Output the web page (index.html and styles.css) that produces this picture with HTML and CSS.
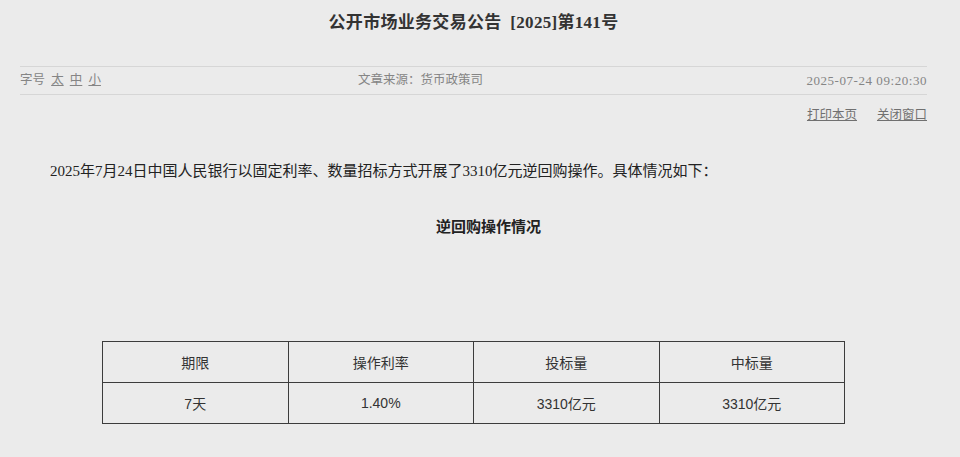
FILE: index.html
```html
<!DOCTYPE html>
<html lang="zh-CN">
<head>
<meta charset="utf-8">
<title>公开市场业务交易公告 [2025]第141号</title>
<link rel="stylesheet" href="styles.css">
</head>
<body>
<div class="page">
  <h1 class="title">公开市场业务交易公告&ensp;[2025]第141号</h1>
  <div class="info">
    <div class="fontsize">字号 <a href="#">太</a> <a href="#">中</a> <a href="#">小</a></div>
    <div class="source">文章来源：货币政策司</div>
    <div class="date">2025-07-24 09:20:30</div>
  </div>
  <div class="tools"><a href="#">打印本页</a><a href="#">关闭窗口</a></div>
  <div class="article">
    <p class="lead">2025年7月24日中国人民银行以固定利率、数量招标方式开展了3310亿元逆回购操作。具体情况如下：</p>
    <h2 class="subtitle">逆回购操作情况</h2>
  </div>
  <table class="data">
    <tr><td>期限</td><td>操作利率</td><td>投标量</td><td>中标量</td></tr>
    <tr><td>7天</td><td>1.40%</td><td>3310亿元</td><td>3310亿元</td></tr>
  </table>
</div>
</body>
</html>
```
FILE: styles.css
```css
html, body {
  margin: 0;
  padding: 0;
  background: #ebebeb;
}
body {
  font-family: "Liberation Serif", "Noto Sans CJK SC", serif;
  color: #333;
}
.page {
  padding: 0 33px 0 20px;
}
.title {
  margin: 0;
  height: 46px;
  line-height: 46px;
  font-size: 17px;
  font-weight: bold;
  text-align: center;
  color: #333;
  letter-spacing: 0.3px;
}
.info {
  margin-top: 20px;
  border-top: 1px solid #d6d6d6;
  border-bottom: 1px solid #d6d6d6;
  height: 27px;
  line-height: 27px;
  display: grid;
  grid-template-columns: 338px 1fr auto;
  font-size: 12.5px;
  color: #858585;
}
.fontsize a {
  color: #858585;
  text-decoration: underline;
  margin-left: 3px;
}
.date {
  font-size: 13px;
  letter-spacing: 0.55px;
  color: #858585;
}
.tools {
  margin-top: 10px;
  line-height: 20px;
  text-align: right;
  font-size: 12.5px;
}
.tools a {
  color: #707070;
  text-decoration: underline;
  margin-left: 20px;
}
.article {
  padding-left: 30px;
}
.lead {
  margin: 34px 0 0;
  line-height: 24px;
  font-size: 15px;
  color: #222;
}
.subtitle {
  margin: 32px 0 0;
  line-height: 24px;
  font-size: 15px;
  font-weight: bold;
  text-align: center;
  color: #222;
}
.data {
  margin: 102px auto 0;
  width: 743px;
  border-collapse: collapse;
  table-layout: fixed;
  font-family: "Liberation Sans", "Noto Sans CJK SC", sans-serif;
  font-size: 14px;
  color: #333;
}
.data td {
  border: 1px solid #3c3c3c;
  height: 40px;
  padding: 0;
  text-align: center;
  vertical-align: middle;
}
```
